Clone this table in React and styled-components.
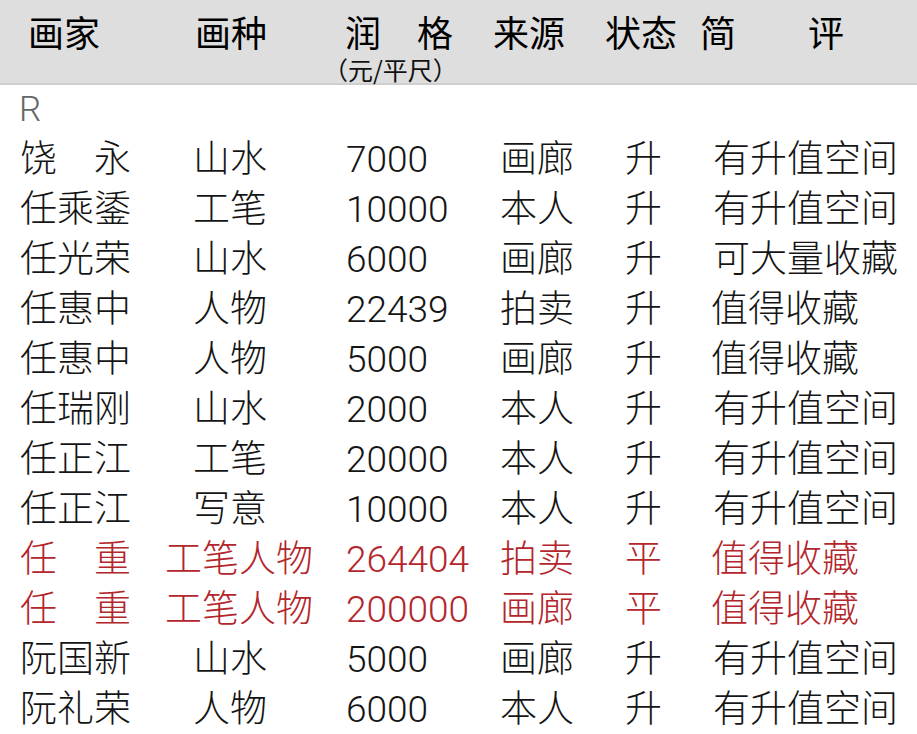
import React from "react";
import styled, { createGlobalStyle } from "styled-components";

const GlobalStyle = createGlobalStyle`
  html, body {
    margin: 0;
    padding: 0;
    background: #fff;
  }
  body {
    font-family: "Roboto", "Noto Sans CJK SC", sans-serif;
  }
`;

const COLS = "145px 181px 154px 125px 86px 1fr";

const Page = styled.div`
  width: 917px;
  height: 734px;
  overflow: hidden;
  background: #fff;
`;

const Header = styled.div`
  height: 83px;
  background: #dedede;
  border-bottom: 2px solid #cfcfcf;
  position: relative;
  font-family: "Noto Sans CJK SC", sans-serif;
  color: #000;
`;

const HeadRow = styled.div`
  display: flex;
  align-items: flex-start;
  padding-top: 12px;
  font-size: 36px;
  font-weight: 400;
  line-height: 38px;
  white-space: pre;
`;

const HeadCell = styled.div`
  width: ${(p) => p.w}px;
  padding-left: ${(p) => p.pad || 0}px;
  box-sizing: border-box;
`;

const Unit = styled.div`
  position: absolute;
  left: 323px;
  top: 56px;
  font-size: 25px;
  line-height: 26px;
  font-weight: 400;
  color: #111;
`;

const Row = styled.div`
  display: grid;
  grid-template-columns: ${COLS};
  padding-left: 20px;
  height: 50px;
  align-items: center;
  font-size: 37px;
  font-weight: 300;
  line-height: 50px;
  color: ${(p) => (p.$red ? "#b3262c" : "#151515")};
  white-space: pre;
`;

const Letter = styled.div`
  height: 50px;
  padding-left: 19px;
  font-family: "Roboto", sans-serif;
  font-weight: 300;
  font-size: 35px;
  line-height: 50px;
  color: #666;
`;

const Cell = styled.div`
  padding-left: ${(p) => p.$indent || 0}px;
`;

const rows = [
  ["饶　永", "山水", "7000", "画廊", "升", "有升值空间"],
  ["任乘鋈", "工笔", "10000", "本人", "升", "有升值空间"],
  ["任光荣", "山水", "6000", "画廊", "升", "可大量收藏"],
  ["任惠中", "人物", "22439", "拍卖", "升", "值得收藏"],
  ["任惠中", "人物", "5000", "画廊", "升", "值得收藏"],
  ["任瑞刚", "山水", "2000", "本人", "升", "有升值空间"],
  ["任正江", "工笔", "20000", "本人", "升", "有升值空间"],
  ["任正江", "写意", "10000", "本人", "升", "有升值空间"],
  ["任　重", "工笔人物", "264404", "拍卖", "平", "值得收藏", true],
  ["任　重", "工笔人物", "200000", "画廊", "平", "值得收藏", true],
  ["阮国新", "山水", "5000", "画廊", "升", "有升值空间"],
  ["阮礼荣", "人物", "6000", "本人", "升", "有升值空间"],
];

export default function App() {
  return (
    <Page>
      <GlobalStyle />
      <Header>
        <HeadRow>
          <HeadCell w={193} pad={28}>画家</HeadCell>
          <HeadCell w={150} pad={2}>画种</HeadCell>
          <HeadCell w={150} pad={2}>润　格</HeadCell>
          <HeadCell w={112}>来源</HeadCell>
          <HeadCell w={95}>状态</HeadCell>
          <HeadCell w={200}>简　　评</HeadCell>
        </HeadRow>
        <Unit>（元/平尺）</Unit>
      </Header>
      <Letter>R</Letter>
      {rows.map((r, i) => (
        <Row key={i} $red={r[6]}>
          <Cell>{r[0]}</Cell>
          <Cell $indent={r[1].length > 2 ? 0 : 28}>{r[1]}</Cell>
          <Cell>{r[2]}</Cell>
          <Cell>{r[3]}</Cell>
          <Cell>{r[4]}</Cell>
          <Cell $indent={r[5].length > 4 ? 2 : 0}>{r[5]}</Cell>
        </Row>
      ))}
    </Page>
  );
}
